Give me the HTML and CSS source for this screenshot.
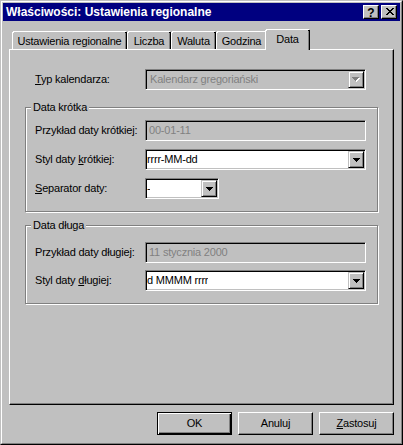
FILE: index.html
```html
<!DOCTYPE html>
<html lang="pl">
<head>
<meta charset="utf-8">
<title>Właściwości: Ustawienia regionalne</title>
<link rel="stylesheet" href="styles.css">
</head>
<body>
<div class="window">
  <div class="frame">
    <div class="titlebar">
      <span class="title">Właściwości: Ustawienia regionalne</span>
      <div class="tb-buttons">
        <span class="tb-btn help">?</span>
        <span class="tb-btn close">
          <svg width="8" height="7" viewBox="0 0 8 7" shape-rendering="crispEdges">
            <rect x="0" y="0" width="2" height="1"/><rect x="6" y="0" width="2" height="1"/>
            <rect x="1" y="1" width="2" height="1"/><rect x="5" y="1" width="2" height="1"/>
            <rect x="2" y="2" width="4" height="1"/>
            <rect x="3" y="3" width="2" height="1"/>
            <rect x="2" y="4" width="4" height="1"/>
            <rect x="1" y="5" width="2" height="1"/><rect x="5" y="5" width="2" height="1"/>
            <rect x="0" y="6" width="2" height="1"/><rect x="6" y="6" width="2" height="1"/>
          </svg>
        </span>
      </div>
    </div>

    <div class="body">
      <div class="tabs">
        <div class="tab t-ust">Ustawienia regionalne</div>
        <div class="tab t-lic">Liczba</div>
        <div class="tab t-wal">Waluta</div>
        <div class="tab t-god">Godzina</div>
        <div class="tab t-dat active">Data</div>
      </div>

      <div class="panel">
        <div class="field top-row">
          <span class="lbl"><u>T</u>yp kalendarza:</span>
          <div class="combo disabled w-full">
            <span class="ctext">Kalendarz gregoriański</span>
            <span class="cbtn">
              <svg width="8" height="5" viewBox="0 0 8 5" shape-rendering="crispEdges">
                <g fill="#fff"><rect x="1" y="1" width="7" height="1"/><rect x="2" y="2" width="5" height="1"/><rect x="3" y="3" width="3" height="1"/><rect x="4" y="4" width="1" height="1"/></g>
                <g fill="#808080"><rect x="0" y="0" width="7" height="1"/><rect x="1" y="1" width="5" height="1"/><rect x="2" y="2" width="3" height="1"/><rect x="3" y="3" width="1" height="1"/></g>
              </svg>
            </span>
          </div>
        </div>

        <div class="group g-short">
          <span class="gtitle">Data krótka</span>
          <div class="field">
            <span class="lbl">Przykład daty krótkiej:</span>
            <div class="edit disabled w-full"><span class="etext">00-01-11</span></div>
          </div>
          <div class="field">
            <span class="lbl">Styl daty <u>k</u>rótkiej:</span>
            <div class="combo w-full">
              <span class="ctext">rrrr-MM-dd</span>
              <span class="cbtn">
                <svg width="7" height="4" viewBox="0 0 7 4" shape-rendering="crispEdges"><rect x="0" y="0" width="7" height="1"/><rect x="1" y="1" width="5" height="1"/><rect x="2" y="2" width="3" height="1"/><rect x="3" y="3" width="1" height="1"/></svg>
              </span>
            </div>
          </div>
          <div class="field">
            <span class="lbl"><u>S</u>eparator daty:</span>
            <div class="combo w-small">
              <span class="ctext">-</span>
              <span class="cbtn">
                <svg width="7" height="4" viewBox="0 0 7 4" shape-rendering="crispEdges"><rect x="0" y="0" width="7" height="1"/><rect x="1" y="1" width="5" height="1"/><rect x="2" y="2" width="3" height="1"/><rect x="3" y="3" width="1" height="1"/></svg>
              </span>
            </div>
          </div>
        </div>

        <div class="group g-long">
          <span class="gtitle">Data długa</span>
          <div class="field">
            <span class="lbl">Przykład daty długiej:</span>
            <div class="edit disabled w-full"><span class="etext">11 stycznia 2000</span></div>
          </div>
          <div class="field">
            <span class="lbl">Styl daty <u>d</u>ługiej:</span>
            <div class="combo w-full">
              <span class="ctext">d MMMM rrrr</span>
              <span class="cbtn">
                <svg width="7" height="4" viewBox="0 0 7 4" shape-rendering="crispEdges"><rect x="0" y="0" width="7" height="1"/><rect x="1" y="1" width="5" height="1"/><rect x="2" y="2" width="3" height="1"/><rect x="3" y="3" width="1" height="1"/></svg>
              </span>
            </div>
          </div>
        </div>
      </div>

      <div class="footer">
        <button class="btn default">OK</button>
        <button class="btn">Anuluj</button>
        <button class="btn"><u>Z</u>astosuj</button>
      </div>
    </div>
  </div>
</div>
</body>
</html>
```
FILE: styles.css
```css
html, body {
  margin: 0;
  padding: 0;
  background: #c0c0c0;
}
body {
  font-family: "Liberation Sans", Arial, sans-serif;
  font-size: 11px;
  line-height: 13px;
  letter-spacing: -0.2px;
  color: #000;
}
u {
  text-decoration: underline;
  text-underline-offset: 1px;
}

.window {
  width: 403px;
  height: 445px;
  box-sizing: border-box;
  border: 1px solid;
  border-color: #c0c0c0 #000 #000 #c0c0c0;
}
.frame {
  height: 100%;
  box-sizing: border-box;
  border: 1px solid;
  border-color: #fff #808080 #808080 #fff;
  padding: 1px;
  display: flex;
  flex-direction: column;
}

/* title bar */
.titlebar {
  flex: none;
  height: 18px;
  background: #000080;
  color: #fff;
  display: flex;
  align-items: center;
  padding: 0 3px 0 3px;
}
.title {
  font-weight: bold;
  font-size: 12px;
  line-height: 14px;
  letter-spacing: 0;
  white-space: nowrap;
}
.tb-buttons {
  margin-left: auto;
  display: flex;
  gap: 2px;
}
.tb-btn {
  width: 16px;
  height: 14px;
  box-sizing: border-box;
  background: #c0c0c0;
  border: 1px solid;
  border-color: #fff #000 #000 #fff;
  box-shadow: inset -1px -1px #808080;
  color: #000;
  display: flex;
}
.tb-btn.help {
  align-items: center;
  justify-content: center;
  font-weight: bold;
  font-size: 12px;
  line-height: 12px;
  letter-spacing: 0;
  padding-top: 1px;
}
.tb-btn.close {
  padding: 2px 0 0 4px;
}
.tb-btn.close svg {
  display: block;
  fill: #000;
}

/* body */
.body {
  flex: 1;
  display: flex;
  flex-direction: column;
  padding: 0 6px;
  min-height: 0;
}

/* tabs */
.tabs {
  flex: none;
  height: 21px;
  margin: 8px 0 -1px;
  padding-left: 3px;
  display: flex;
  align-items: flex-end;
  position: relative;
  z-index: 1;
}
.tab {
  position: relative;
  box-sizing: border-box;
  height: 18px;
  margin-bottom: 1px;
  border: 1px solid;
  border-bottom: none;
  border-color: #fff #000 transparent #fff;
  box-shadow: inset -1px 0 #808080;
  background: #c0c0c0;
  padding-top: 3px;
  text-align: center;
  white-space: nowrap;
}
.tab::before {
  content: "";
  position: absolute;
  left: -1px;
  top: -1px;
  width: 1px;
  height: 1px;
  background: #c0c0c0;
  box-shadow: 1px 1px #fff;
}
.tab::after {
  content: "";
  position: absolute;
  right: -1px;
  top: -1px;
  width: 1px;
  height: 1px;
  background: #c0c0c0;
  box-shadow: -1px 1px #000;
}
.t-ust { width: 115px; }
.t-lic { width: 44px; }
.t-wal { width: 45px; }
.t-god { width: 51px; }
.t-dat { width: 41px; }
.tab.active {
  width: 45px;
  height: 21px;
  margin: 0 -2px;
  padding-top: 3px;
  z-index: 2;
}

/* panel */
.panel {
  flex: 1;
  border: 1px solid;
  border-color: #fff #000 #000 #fff;
  box-shadow: inset -1px -1px #808080;
  display: flex;
  flex-direction: column;
}
.field {
  display: flex;
  align-items: center;
  height: 21px;
}
.lbl {
  flex: none;
  width: 110px;
  white-space: nowrap;
}
.top-row {
  margin: 19px 0 0 25px;
}

/* group boxes */
.group {
  position: relative;
  margin: 17px 15px 0 15px;
  border: 1px solid #808080;
  box-shadow: inset 1px 1px #fff, 1px 1px #fff;
  padding: 12px 0 12px 9px;
  display: flex;
  flex-direction: column;
  gap: 8px;
}
.group.g-long {
  margin-top: 13px;
  padding-top: 16px;
  gap: 7px;
}
.gtitle {
  position: absolute;
  top: -7px;
  left: 5px;
  padding: 0 2px;
  background: #c0c0c0;
  white-space: nowrap;
}

/* controls */
.w-full { width: 221px; }
.w-small { width: 74px; }

.edit, .combo {
  box-sizing: border-box;
  height: 21px;
  border: 1px solid;
  border-color: #808080 #fff #fff #808080;
  box-shadow: inset 1px 1px #000, inset -1px -1px #c0c0c0;
  background: #fff;
  padding: 1px;
  display: flex;
  align-items: center;
}
.edit.disabled, .combo.disabled {
  background: #c0c0c0;
  color: #808080;
}
.etext {
  padding-left: 2px;
  white-space: nowrap;
}
.ctext {
  padding-left: 0;
  white-space: nowrap;
  overflow: hidden;
}
.combo.disabled .ctext {
  padding-left: 3px;
}
.cbtn {
  margin-left: auto;
  flex: none;
  width: 16px;
  height: 17px;
  box-sizing: border-box;
  border: 1px solid;
  border-color: #c0c0c0 #000 #000 #c0c0c0;
  box-shadow: inset 1px 1px #fff, inset -1px -1px #808080;
  background: #c0c0c0;
  display: flex;
  align-items: center;
  justify-content: center;
}
.cbtn svg {
  display: block;
  fill: #000;
}

/* footer buttons */
.footer {
  flex: none;
  display: flex;
  justify-content: flex-end;
  gap: 6px;
  margin: 7px 0 7px;
}
.btn {
  width: 75px;
  height: 23px;
  box-sizing: border-box;
  margin: 0;
  padding: 0;
  background: #c0c0c0;
  border: 1px solid;
  border-color: #fff #000 #000 #fff;
  box-shadow: inset -1px -1px #808080;
  font-family: "Liberation Sans", Arial, sans-serif;
  font-size: 11px;
  line-height: 13px;
  letter-spacing: -0.2px;
  color: #000;
  text-align: center;
}
.btn.default {
  border-color: #000;
  box-shadow: inset 1px 1px #fff, inset -1px -1px #000, inset -2px -2px #808080;
}
```
